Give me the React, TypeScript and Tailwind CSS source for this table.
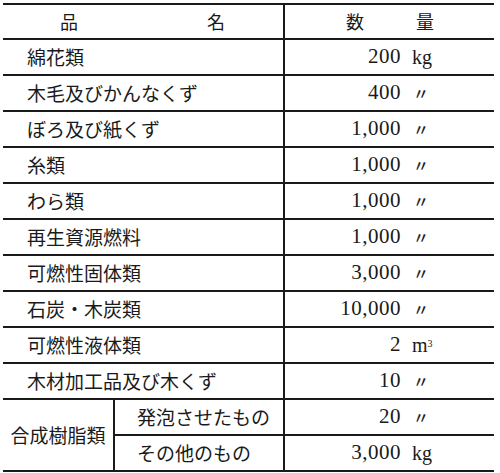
const rows: { name: string; qty: string; unit: string }[] = [
  { name: "綿花類", qty: "200", unit: "kg" },
  { name: "木毛及びかんなくず", qty: "400", unit: "〃" },
  { name: "ぼろ及び紙くず", qty: "1,000", unit: "〃" },
  { name: "糸類", qty: "1,000", unit: "〃" },
  { name: "わら類", qty: "1,000", unit: "〃" },
  { name: "再生資源燃料", qty: "1,000", unit: "〃" },
  { name: "可燃性固体類", qty: "3,000", unit: "〃" },
  { name: "石炭・木炭類", qty: "10,000", unit: "〃" },
  { name: "可燃性液体類", qty: "2", unit: "m³" },
  { name: "木材加工品及び木くず", qty: "10", unit: "〃" },
];

const jp = { fontFamily: '"Noto Sans CJK JP", sans-serif' };
const num = { fontFamily: '"Liberation Serif", serif' };

function Qty({ qty, unit }: { qty: string; unit: string }) {
  return (
    <div className="flex h-full flex-1 items-center">
      <span className="w-[116px] text-right text-[21px] tracking-[0.5px]" style={num}>
        {qty}
      </span>
      {unit === "〃" ? (
        <span className="ml-[12px] text-[16px] font-medium text-[#222]" style={jp}>
          〃
        </span>
      ) : unit === "m³" ? (
        <span className="ml-[11px] text-[20px]" style={num}>
          m<sup className="text-[10px]">3</sup>
        </span>
      ) : (
        <span className="ml-[11px] text-[20px]" style={num}>
          {unit}
        </span>
      )}
    </div>
  );
}

export default function App() {
  return (
    <div className="h-[473px] w-[500px] bg-white pl-[3px] pt-[3px] text-[#1a1a1a]">
      <div className="w-[491px] border-t-2 border-[#1a1a1a]">
        <div className="flex h-[35px] items-center border-b-2 border-[#1a1a1a] text-[18px]" style={jp}>
          <div className="flex h-full w-[282px] items-center justify-between border-r-2 border-[#1a1a1a] pl-[57px] pr-[58px]">
            <span>品</span>
            <span>名</span>
          </div>
          <div className="flex h-full flex-1 items-center justify-between pl-[61px] pr-[60px]">
            <span>数</span>
            <span>量</span>
          </div>
        </div>

        {rows.map((r) => (
          <div key={r.name} className="flex h-[36px] items-center border-b-2 border-[#1a1a1a]">
            <div className="flex h-full w-[282px] items-center border-r-2 border-[#1a1a1a] pl-[24px] text-[19px]" style={jp}>
              {r.name}
            </div>
            <Qty qty={r.qty} unit={r.unit} />
          </div>
        ))}

        <div className="flex h-[72px] border-b-2 border-[#1a1a1a]">
          <div className="flex w-[112px] items-center justify-center border-r-2 border-[#1a1a1a] text-[19px]" style={jp}>
            合成樹脂類
          </div>
          <div className="flex flex-1 flex-col">
            <div className="flex h-[36px] items-center border-b-2 border-[#1a1a1a]">
              <div className="flex h-full w-[170px] items-center border-r-2 border-[#1a1a1a] pl-[22px] text-[19px]" style={jp}>
                発泡させたもの
              </div>
              <Qty qty="20" unit="〃" />
            </div>
            <div className="flex flex-1 items-center">
              <div className="flex h-full w-[170px] items-center border-r-2 border-[#1a1a1a] pl-[22px] text-[19px]" style={jp}>
                その他のもの
              </div>
              <Qty qty="3,000" unit="kg" />
            </div>
          </div>
        </div>
      </div>
    </div>
  );
}
